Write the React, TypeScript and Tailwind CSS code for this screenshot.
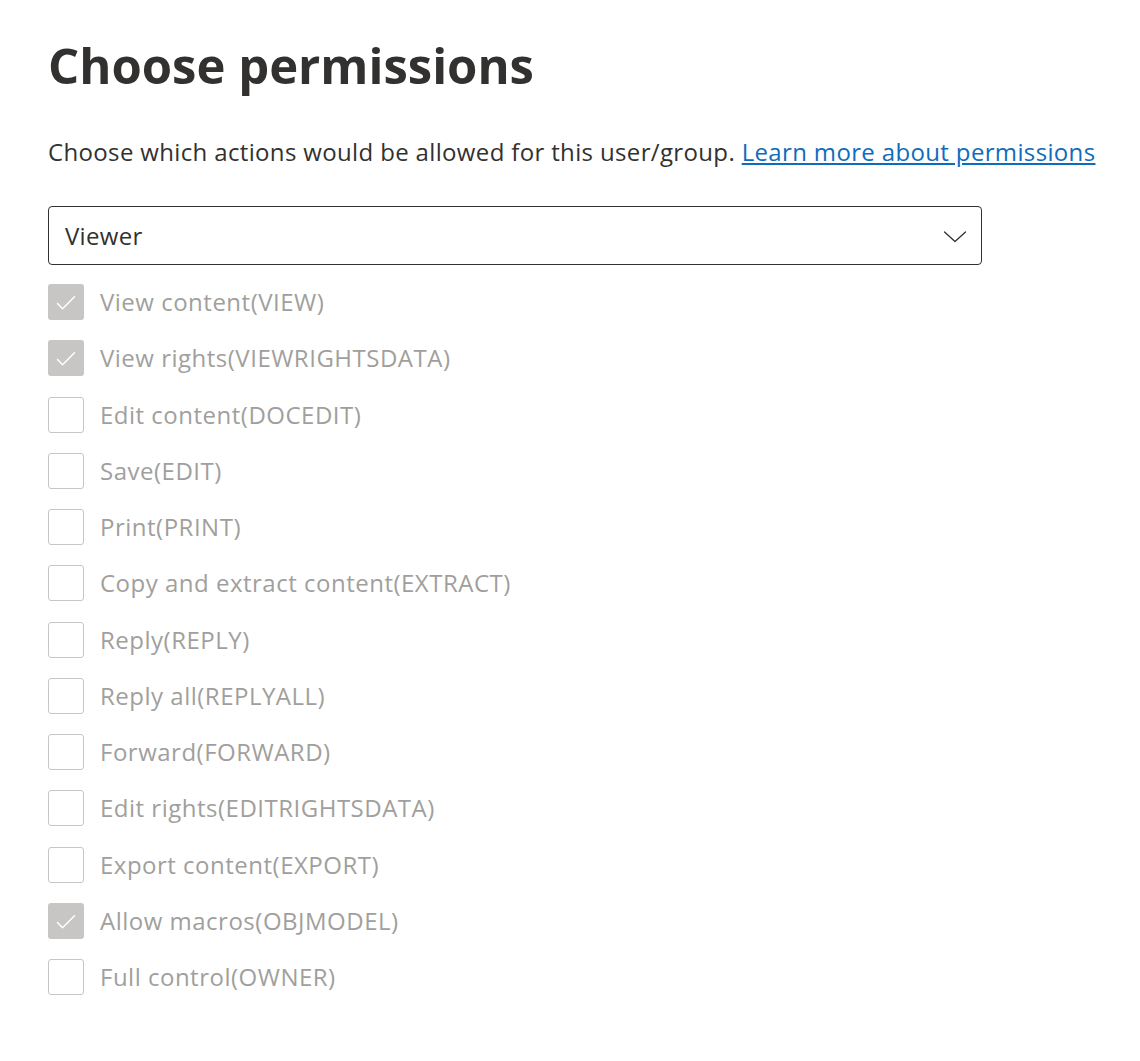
import { useState } from "react";

const perms = [
  { label: "View content(VIEW)", on: true },
  { label: "View rights(VIEWRIGHTSDATA)", on: true },
  { label: "Edit content(DOCEDIT)", on: false },
  { label: "Save(EDIT)", on: false },
  { label: "Print(PRINT)", on: false },
  { label: "Copy and extract content(EXTRACT)", on: false },
  { label: "Reply(REPLY)", on: false },
  { label: "Reply all(REPLYALL)", on: false },
  { label: "Forward(FORWARD)", on: false },
  { label: "Edit rights(EDITRIGHTSDATA)", on: false },
  { label: "Export content(EXPORT)", on: false },
  { label: "Allow macros(OBJMODEL)", on: true },
  { label: "Full control(OWNER)", on: false },
];

function Box({ on }: { on: boolean }) {
  if (on)
    return (
      <span className="h-9 w-9 shrink-0 rounded-[3px] bg-[#c8c6c4]">
        <svg width="36" height="36" viewBox="0 0 36 36" fill="none">
          <path d="M9.5 19.5l5 5.2 12-12" stroke="#fff" strokeWidth="1.5" strokeLinecap="round" strokeLinejoin="round" />
        </svg>
      </span>
    );
  return <span className="h-9 w-9 shrink-0 rounded-[3px] border-[1.5px] border-[#c8c6c4] bg-white" />;
}

export default function App() {
  const [role] = useState("Viewer");
  return (
    <div className="min-h-screen bg-white pl-12 pt-[29px] font-['Open_Sans',sans-serif] text-[#323130]">
      <h1 className="text-[49px] font-bold leading-[72px]">Choose permissions</h1>
      <p className="mt-[35px] text-[24px] leading-8 tracking-[0.35px]">
        Choose which actions would be allowed for this user/group.{" "}
        <a href="#" className="text-[#0f6cbd] underline underline-offset-2">
          Learn more about permissions
        </a>
      </p>
      <div className="mt-[38px] flex h-[59px] w-[934px] items-center justify-between rounded-[4px] border border-[#323130] pl-4 pr-[14px]">
        <span className="text-[24px] tracking-[0.3px]">{role}</span>
        <svg width="24" height="24" viewBox="0 0 24 24" fill="none">
          <path d="M1.5 8l10.5 9.5 10.5-9.5" stroke="#323130" strokeWidth="1.3" strokeLinecap="round" strokeLinejoin="round" />
        </svg>
      </div>
      <ul className="mt-[9px]">
        {perms.map((p) => (
          <li key={p.label} className="flex h-[56.25px] items-center gap-4">
            <Box on={p.on} />
            <span className="text-[24px] tracking-[0.5px] text-[#a19f9d]">{p.label}</span>
          </li>
        ))}
      </ul>
    </div>
  );
}
